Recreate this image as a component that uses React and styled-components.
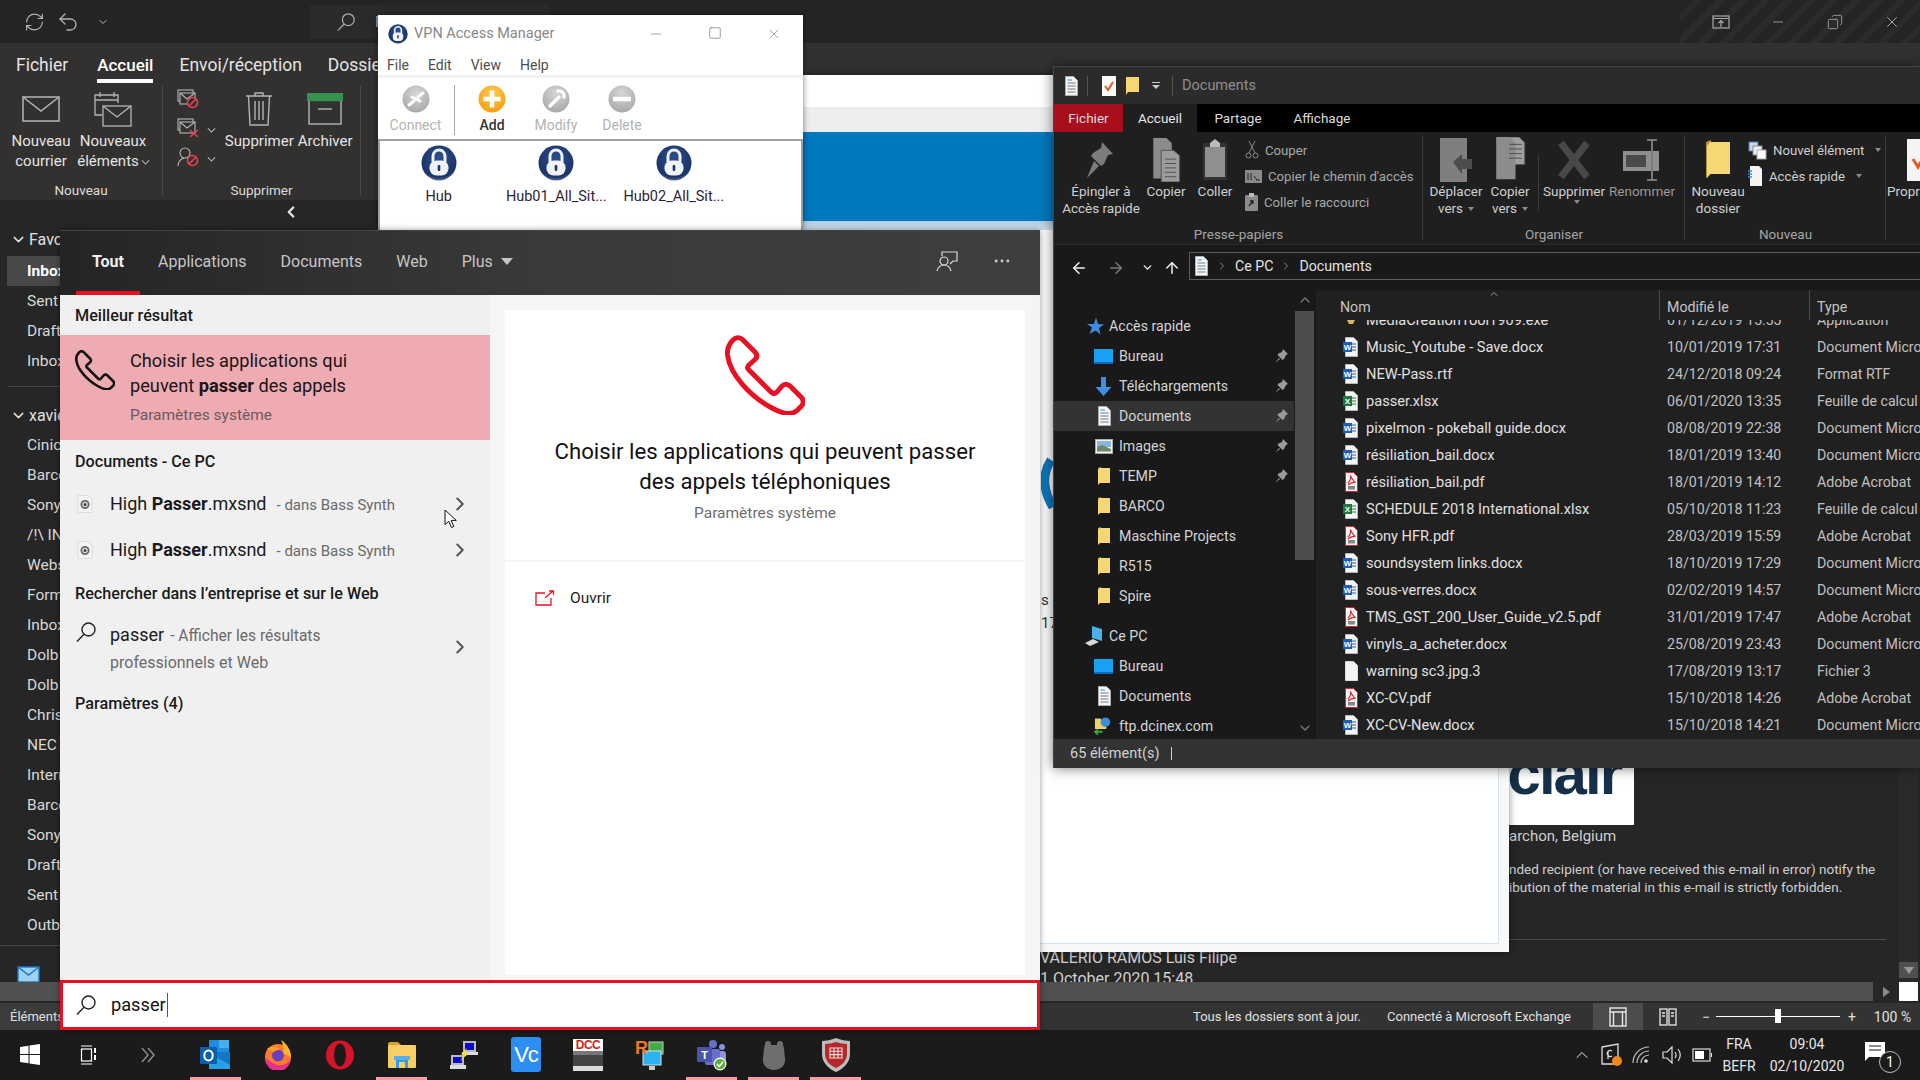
import React from 'react';
import styled, { createGlobalStyle } from 'styled-components';
import { RefreshCw, Undo2, ArrowLeft, ArrowRight, ArrowUp, ChevronDown, ChevronRight, ChevronLeft, ChevronUp, Minus, Square, X, Copy, MoreHorizontal } from 'lucide-react';

const GlobalStyle = createGlobalStyle`
  html, body { margin: 0; padding: 0; background: #262626; }
  body { font-family: Roboto, "Open Sans", sans-serif; overflow: hidden; }
  * { box-sizing: border-box; }
`;

/* ---------- page + outlook behind everything ---------- */

const Desktop = styled.div`
  position: relative;
  width: 1920px;
  height: 1080px;
  overflow: hidden;
  display: flex;
  flex-direction: column;
  background: #262626;
`;

const OlTitle = styled.div`
  height: 43px;
  flex: none;
  display: flex;
  align-items: center;
  padding-left: 24px;
  color: #b4b4b4;
  background:
    repeating-linear-gradient(135deg, transparent 0 10px, #2b2b2b 10px 16px) 1680px 0 / 240px 100% no-repeat,
    #242424;
`;

const QuickIcon = styled.div`
  width: ${p => p.$w}px;
  display: flex;
  justify-content: center;
`;

const OlSearch = styled.div`
  margin-left: 195px;
  width: 240px;
  height: 34px;
  display: flex;
  align-items: center;
  gap: 19px;
  padding-left: 26px;
  background: #2a2a2a;
  font-size: 15px;
`;

const WinControls = styled.div`
  margin-left: auto;
  display: flex;
  align-items: center;
`;

const WinControl = styled.div`
  width: 57px;
  display: flex;
  justify-content: center;
  color: #b0b0b0;
`;

const OlRibbon = styled.div`
  height: 157px;
  flex: none;
  background: #323130;
  color: #e4e4e4;
`;

const OlTabs = styled.div`
  height: 43px;
  display: flex;
  align-items: center;
  gap: 26px;
  padding-left: 16px;
`;

const OlTab = styled.div`
  position: relative;
  font-size: ${p => (p.$active ? 17 : 17.5)}px;
  font-weight: ${p => (p.$active ? 500 : 400)};
  color: ${p => (p.$active ? '#fff' : '#e4e4e4')};
  white-space: nowrap;
  margin-left: ${p => (p.$active ? 3 : 0)}px;
  ${p => p.$active && `
    &::after {
      content: '';
      position: absolute;
      left: 0;
      right: 0;
      bottom: -8px;
      height: 4px;
      background: #fff;
    }
  `}
`;

const OlGroups = styled.div`
  height: 114px;
  display: flex;
`;

const OlGroup = styled.div`
  width: ${p => p.$w}px;
  display: flex;
  flex-direction: column;
  border-right: 1px solid #4a4a4a;
  margin-bottom: 5px;
`;

const OlGroupBody = styled.div`
  flex: 1;
  display: flex;
  padding-left: ${p => p.$pad || 0}px;
`;

const OlGroupLabel = styled.div`
  height: 10px;
  text-align: center;
  font-size: 13.5px;
  color: #dcdcdc;
  line-height: 10px;
`;

const OlLarge = styled.div`
  width: ${p => p.$w}px;
  display: flex;
  flex-direction: column;
  align-items: center;
  font-size: 15px;
  line-height: 20px;
  text-align: center;
  white-space: nowrap;
`;

const OlLargeIcon = styled.div`
  height: 45px;
  flex: none;
  display: flex;
  align-items: center;
  justify-content: center;
`;

const OlSmallCol = styled.div`
  width: 53px;
  display: flex;
  flex-direction: column;
  gap: 5px;
  padding-top: 1px;
  & > div { display: flex; align-items: center; gap: 6px; height: 24px; }
`;

const OlBody = styled.div`
  height: 782px;
  flex: none;
  display: flex;
`;

const NavPane = styled.div`
  width: 310px;
  flex: none;
  display: flex;
  flex-direction: column;
  padding-top: 22px;
  position: relative;
  color: #d8d8d8;
  font-size: 15.5px;
  overflow: hidden;
`;

const CollapseBtn = styled.div`
  position: absolute;
  left: 282px;
  top: 3px;
  color: #e8e8e8;
`;

const NavHeader = styled.div`
  height: ${p => p.$h}px;
  flex: none;
  display: flex;
  align-items: center;
  gap: 2px;
  padding-left: 10px;
  font-size: 16px;
  color: #e0e0e0;
  white-space: nowrap;
`;

const NavItem = styled.div`
  height: 30px;
  flex: none;
  margin-left: 7px;
  padding-left: 20px;
  display: flex;
  align-items: center;
  white-space: nowrap;
  background: ${p => (p.$active ? '#484848' : 'transparent')};
  font-weight: ${p => (p.$active ? 700 : 400)};
  color: ${p => (p.$active ? '#fff' : '#d8d8d8')};
`;

const NavRule = styled.div`
  height: 1px;
  flex: none;
  margin: ${p => p.$m};
  background: #444;
`;

const NavMail = styled.div`
  flex: none;
  padding: 20px 0 0 17px;
`;

const Reading = styled.div`
  flex: 1;
  display: flex;
  flex-direction: column;
  justify-content: flex-end;
  align-items: flex-start;
  color: #d0d0d0;
  overflow: hidden;
`;

const LogoBox = styled.div`
  margin: 0 0 0 1160px;
  width: 164px;
  height: 130px;
  background: #fff;
  display: flex;
  justify-content: flex-end;
  align-items: flex-end;
  padding: 0 13px 28px 0;
  color: #17304a;
  font-family: "Liberation Sans", sans-serif;
  font-weight: 700;
  font-size: 60px;
  line-height: 46px;
  letter-spacing: -2px;
  overflow: hidden;
`;

const MailLine = styled.div`
  margin-left: ${p => p.$left || 1199}px;
  margin-top: ${p => p.$top || 0}px;
  font-size: ${p => p.$size || 13.5}px;
  line-height: ${p => p.$lh || 18}px;
  height: ${p => p.$h || p.$lh || 18}px;
  white-space: nowrap;
  overflow: ${p => (p.$h ? 'hidden' : 'visible')};
`;

const MailRule = styled.div`
  margin: 43px 0 8px 1199px;
  width: 377px;
  height: 1px;
  background: #4a4a4a;
`;

const VStrip = styled.div`
  width: 19px;
  margin-right: 2px;
  flex: none;
  display: flex;
  flex-direction: column;
  justify-content: flex-end;
  background: #2a2a2a;
  padding-bottom: 4px;
`;

const VArrow = styled.div`
  height: 16px;
  background: #505050;
  display: flex;
  align-items: center;
  justify-content: center;
  &::after {
    content: '';
    border: 5px solid transparent;
    border-top: 7px solid #999;
    border-bottom: 0;
  }
`;

const HScroll = styled.div`
  height: 21px;
  flex: none;
  display: flex;
  align-items: stretch;
  padding-bottom: 2px;
`;

const HThumb = styled.div`
  width: 1873px;
  background: #505050;
`;

const HArrow = styled.div`
  width: 26px;
  display: flex;
  align-items: center;
  justify-content: center;
  &::after {
    content: '';
    border: 5px solid transparent;
    border-left: 7px solid #8a8a8a;
    border-right: 0;
  }
`;

const HCorner = styled.div`
  width: 19px;
  background: #fff;
`;

const OlStatus = styled.div`
  height: 27px;
  flex: none;
  display: flex;
  align-items: center;
  background: #333;
  color: #e0e0e0;
  font-size: 13px;
`;

const StatusLeft = styled.div`
  width: 60px;
  padding-left: 10px;
  height: 100%;
  display: flex;
  align-items: center;
  background: #3c3c3c;
  overflow: hidden;
`;

const StatusText = styled.div`
  margin-left: ${p => p.$left}px;
  white-space: nowrap;
`;

const ViewBtn = styled.div`
  width: ${p => p.$w}px;
  height: 100%;
  margin-left: ${p => p.$left || 0}px;
  display: flex;
  align-items: center;
  justify-content: center;
  background: ${p => (p.$active ? '#4c4c4c' : 'transparent')};
`;

const Zoom = styled.div`
  margin-left: 9px;
  display: flex;
  align-items: center;
  gap: 6px;
  font-size: 14px;
`;

const ZoomTrack = styled.div`
  position: relative;
  width: 124px;
  height: 1px;
  margin: 0 2px 0 0;
  background: #fff;
  &::after {
    content: '';
    position: absolute;
    left: 59px;
    top: -7px;
    width: 6px;
    height: 14px;
    background: #fff;
  }
`;

const ZoomValue = styled.span`
  margin-left: 12px;
`;

/* ---------- taskbar ---------- */

const Taskbar = styled.div`
  height: 50px;
  flex: none;
  display: flex;
  align-items: center;
  background: #1b1b1b;
  color: #e8e8e8;
`;

const TaskCell = styled.div`
  position: relative;
  width: ${p => p.$w}px;
  height: 100%;
  flex: none;
  display: flex;
  align-items: center;
  justify-content: center;
  margin-left: ${p => p.$left || 0}px;
  padding-bottom: 1px;
  ${p => p.$open && `
    &::after {
      content: '';
      position: absolute;
      bottom: 0;
      left: 5px;
      right: 6px;
      height: 3px;
      background: #ff9da3;
    }
  `}
`;

const Tray = styled.div`
  margin-left: auto;
  padding-right: 17px;
  display: flex;
  height: 100%;
  align-items: center;
`;

const TrayText = styled.div`
  width: ${p => p.$w}px;
  height: 100%;
  display: flex;
  flex-direction: column;
  align-items: center;
  justify-content: center;
  gap: 5px;
  font-size: 14px;
  line-height: 17px;
  color: #e6e6e6;
`;

const NotifBadge = styled.div`
  position: absolute;
  left: 26px;
  top: 21px;
  width: 22px;
  height: 22px;
  border-radius: 50%;
  border: 1px solid #bbb;
  background: #1b1b1b;
  color: #fff;
  font-size: 14px;
  line-height: 20px;
  text-align: center;
`;

/* ---------- white window behind ---------- */

const WhiteWindow = styled.div`
  position: absolute;
  left: 803px;
  top: 75px;
  width: 706px;
  height: 877px;
  background: #f8f8f8;
  display: flex;
  flex-direction: column;
  box-shadow: 0 0 8px rgba(0, 0, 0, 0.45);
`;

const Band = styled.div`
  height: ${p => p.$h}px;
  flex: none;
  background: ${p => p.$bg};
`;

const WhiteBody = styled.div`
  flex: 1;
  margin: 0 10px 8px 0;
  padding: 227px 0 0 238px;
  background: #fff;
  border-right: 1px solid #d3e3f0;
  border-bottom: 1px solid #d3e3f0;
  color: #333;
  font-size: 15px;
  line-height: 23px;
  & > svg { display: block; }
`;

const WhiteNote = styled.div`
  margin-top: ${p => p.$top || 0}px;
`;

/* ---------- vpn window ---------- */

const VpnWindow = styled.div`
  position: absolute;
  left: 378px;
  top: 15px;
  width: 425px;
  height: 215px;
  display: flex;
  flex-direction: column;
  background: #fff;
  box-shadow: 0 0 6px rgba(0, 0, 0, 0.5);
`;

const VpnTitle = styled.div`
  height: 37px;
  display: flex;
  align-items: center;
  padding-left: 10px;
  gap: 6px;
  color: #888;
  font-size: 14.5px;
`;

const VpnControls = styled.div`
  margin-left: auto;
  display: flex;
  color: #777;
`;

const VpnControl = styled.div`
  width: 59px;
  display: flex;
  justify-content: center;
`;

const VpnMenu = styled.div`
  height: 26px;
  display: flex;
  align-items: center;
  gap: 19px;
  padding: 2px 0 0 9px;
  color: #4e4e4e;
  font-size: 14px;
  border-bottom: 3px solid #f1f1f1;
`;

const VpnTools = styled.div`
  height: 61px;
  display: flex;
  padding-top: 7px;
`;

const VpnTool = styled.div`
  width: ${p => p.$w}px;
  display: flex;
  flex-direction: column;
  align-items: center;
  gap: 4px;
  font-size: 14px;
  color: ${p => (p.$on ? '#333' : '#b2b2b2')};
  font-weight: ${p => (p.$on ? 500 : 400)};
`;

const VpnSep = styled.div`
  width: 1px;
  height: 50px;
  margin: 0 0 0 1px;
  background: #a9a9a9;
`;

const VpnList = styled.div`
  flex: 1;
  display: flex;
  padding: 4px 0 0 0;
  border: 2px solid #a0a0a0;
  border-bottom: 0;
  background: #fff;
`;

const VpnHub = styled.div`
  width: 117.5px;
  display: flex;
  flex-direction: column;
  align-items: center;
  gap: 7px;
  font-size: 14.5px;
  color: #2c2338;
  white-space: nowrap;
`;

/* ---------- search panel ---------- */

const SearchPanel = styled.div`
  position: absolute;
  left: 60px;
  top: 230px;
  width: 980px;
  height: 800px;
  display: flex;
  flex-direction: column;
  background: #f5f5f5;
  box-shadow: 0 0 6px rgba(0, 0, 0, 0.4);
`;

const SearchHeader = styled.div`
  height: 65px;
  flex: none;
  display: flex;
  align-items: center;
  padding: 0 0 4px 32px;
  gap: 34px;
  color: #c4c4c4;
  background: linear-gradient(90deg, #242424 0%, #3a3a3a 50%, #3d3e3f 100%);
  border-top: 1px solid #444;
  position: relative;
`;

const SearchTab = styled.div`
  position: relative;
  font-size: 16px;
  font-weight: ${p => (p.$active ? 700 : 400)};
  color: ${p => (p.$active ? '#efefef' : '#c6c6c6')};
  display: flex;
  align-items: center;
  gap: 8px;
  ${p => p.$active && `
    &::after {
      content: '';
      position: absolute;
      left: -16px;
      right: -16px;
      bottom: -25px;
      height: 5px;
      background: #e81123;
    }
  `}
`;

const HeaderActions = styled.div`
  margin-left: auto;
  display: flex;
  align-items: center;
  gap: 34px;
  padding-right: 28px;
  color: #d0d0d0;
`;

const SearchColumns = styled.div`
  flex: 1;
  display: grid;
  grid-template-columns: 430px 1fr;
  min-height: 0;
`;

const ResultCol = styled.div`
  position: relative;
  background: #f0f0f0;
  display: flex;
  flex-direction: column;
`;

const SectionTitle = styled.div`
  height: ${p => p.$h}px;
  display: flex;
  align-items: center;
  padding: 1px 0 0 15px;
  font-size: 16.2px;
  font-weight: 500;
  color: #1a1a1a;
`;

const BestMatch = styled.div`
  height: 105px;
  background: #eeabb2;
  display: flex;
  padding: 15px 0 0 15px;
`;

const BestText = styled.div`
  margin: -2px 0 0 15px;
  color: #1b1516;
  font-size: 18.2px;
  line-height: 25px;
  b { font-weight: 700; }
`;

const BestSub = styled.div`
  margin-top: 7px;
  font-size: 15.5px;
  color: #6c5a5d;
  line-height: 20px;
`;

const ResultRow = styled.div`
  height: ${p => p.$h}px;
  display: flex;
  align-items: ${p => (p.$top ? 'flex-start' : 'center')};
  padding: ${p => (p.$top ? '8px' : '0')} 14px 0 15px;
`;

const ResultIcon = styled.div`
  width: 35px;
  flex: none;
  display: flex;
  padding-left: ${p => p.$pad || 0}px;
`;

const ResultText = styled.div`
  flex: 1;
  font-size: 18px;
  color: #1a1a1a;
  line-height: 27px;
  white-space: nowrap;
  b { font-weight: 700; }
`;

const ResultMuted = styled.span`
  font-size: ${p => p.$size || 15}px;
  color: #6a6a6a;
  margin-left: ${p => p.$gap || 10}px;
`;

const ResultMore = styled.div`
  font-size: 16px;
  color: #6a6a6a;
  line-height: 26px;
`;

const Arrow = styled.div`
  color: #555;
  width: 24px;
  margin-right: 4px;
  display: flex;
  justify-content: center;
  ${p => p.$shift && `margin-top: 15px;`}
`;

const MouseCursor = styled.div`
  position: absolute;
  left: 384px;
  top: 214px;
`;

const PreviewCol = styled.div`
  padding: 15px 15px 5px;
  display: flex;
  flex-direction: column;
`;

const PreviewCard = styled.div`
  height: 250px;
  flex: none;
  background: #fff;
  display: flex;
  flex-direction: column;
  align-items: center;
  padding-top: 25px;
`;

const PreviewTitle = styled.div`
  margin-top: 21px;
  font-size: 22.2px;
  line-height: 30px;
  color: #111;
  text-align: center;
`;

const PreviewSub = styled.div`
  margin-top: 8px;
  color: #6e6e6e;
  font-size: 15.5px;
`;

const PreviewActions = styled.div`
  flex: 1;
  margin-top: 2px;
  background: #fff;
  padding: 27px 0 0 30px;
`;

const OpenAction = styled.div`
  display: flex;
  align-items: center;
  gap: 15px;
  font-size: 15.5px;
  color: #222;
`;

const SearchInput = styled.div`
  height: 50px;
  flex: none;
  display: flex;
  align-items: center;
  gap: 14px;
  padding-left: 12px;
  border: 3px solid #e81123;
  background: #fff;
  font-size: 18.2px;
  color: #111;
`;

const Caret = styled.span`
  display: inline-block;
  width: 1.5px;
  height: 24px;
  margin-left: 1px;
  background: #555;
  vertical-align: -6px;
`;

/* ---------- explorer ---------- */

const Explorer = styled.div`
  position: absolute;
  left: 1053px;
  top: 66px;
  width: 867px;
  height: 702px;
  display: flex;
  flex-direction: column;
  background: #191919;
  border-top: 1px solid #444;
  border-left: 1px solid #444;
  box-shadow: 0 0 12px rgba(0, 0, 0, 0.55);
  color: #d9d9d9;
  font-size: 14.2px;
  overflow: hidden;
`;

const ExTitle = styled.div`
  height: 37px;
  flex: none;
  display: flex;
  align-items: center;
  padding-left: 9px;
  background: #2b2b2b;
  color: #8f8f8f;
  font-size: 14.5px;
`;

const ExTitleSep = styled.div`
  width: 1px;
  height: 20px;
  margin: 0 ${p => p.$r}px 0 ${p => p.$l}px;
  background: #555;
`;

const TitleGap = styled.span`
  width: ${p => p.$w}px;
`;

const ExTabs = styled.div`
  height: 28px;
  flex: none;
  display: flex;
  background: #000;
  font-size: 13.5px;
`;

const ExTab = styled.div`
  width: ${p => p.$w}px;
  display: flex;
  align-items: center;
  justify-content: center;
  color: ${p => (p.$active ? '#e8e8e8' : '#dcdcdc')};
  background: ${p => p.$bg || 'transparent'};
`;

const ExRibbon = styled.div`
  height: 113px;
  flex: none;
  display: flex;
  background: #1f1f1f;
  border-bottom: 1px solid #2b2b2b;
  font-size: 13.5px;
  color: #bdbdbd;
`;

const ExGroup = styled.div`
  width: ${p => p.$w}px;
  flex: none;
  display: flex;
  flex-direction: column;
  padding: 5px 0 0 ${p => p.$pad || 0}px;
  position: relative;
  &::after {
    content: '';
    position: absolute;
    right: 0;
    top: 3px;
    bottom: 4px;
    width: 1px;
    background: #3b3b3b;
  }
`;

const ExGroupBody = styled.div`
  flex: 1;
  display: flex;
  min-height: 0;
`;

const ExGroupLabel = styled.div`
  height: 18px;
  margin-left: ${p => (p.$pad ? -p.$pad : 0)}px;
  text-align: center;
  font-size: 13.5px;
  line-height: 16px;
  color: #a5a5a5;
`;

const ExLarge = styled.div`
  width: ${p => p.$w}px;
  flex: none;
  display: flex;
  flex-direction: column;
  align-items: center;
  text-align: center;
  line-height: 17px;
  color: ${p => (p.$dim ? '#9a9a9a' : '#cfcfcf')};
  white-space: nowrap;
`;

const ExLargeIcon = styled.div`
  height: 46px;
  flex: none;
  display: flex;
  align-items: center;
  justify-content: center;
`;

const DropMark = styled.span`
  display: inline-block;
  margin-left: 5px;
  vertical-align: 2px;
  border: 3px solid transparent;
  border-top: 4px solid #8a8a8a;
  border-bottom: 0;
`;

const ExDivider = styled.div`
  width: 1px;
  height: 55px;
  margin: 18px 3px 0 3px;
  background: #3b3b3b;
`;

const ExSmallCol = styled.div`
  margin-left: ${p => p.$left}px;
  display: flex;
  flex-direction: column;
  font-size: 13.2px;
`;

const ExSmall = styled.div`
  height: 26px;
  display: flex;
  align-items: center;
  gap: 6px;
  white-space: nowrap;
  color: ${p => (p.$on ? '#cfcfcf' : '#a8a8a8')};
`;

const AddressRow = styled.div`
  height: 45px;
  flex: none;
  display: flex;
  align-items: center;
  padding-left: 12px;
  color: #e8e8e8;
`;

const AddrBtn = styled.div`
  width: ${p => p.$w}px;
  flex: none;
  display: flex;
  justify-content: center;
  color: ${p => (p.$dim ? '#7a7a7a' : '#f0f0f0')};
`;

const AddressBox = styled.div`
  flex: 1;
  height: 28px;
  margin-top: -4px;
  display: flex;
  align-items: center;
  gap: 7px;
  padding-left: 3px;
  border: 1px solid #5c5c5c;
  border-right: 0;
  color: #e2e2e2;
  & > svg { flex: none; }
`;

const ExMain = styled.div`
  flex: 1;
  min-height: 0;
  display: flex;
`;

const TreePane = styled.div`
  width: 262px;
  flex: none;
  display: flex;
  background: #191919;
`;

const Tree = styled.div`
  width: 240px;
  flex: none;
  padding-top: 21px;
  overflow: hidden;
`;

const TreeRow = styled.div`
  height: 30px;
  flex: none;
  display: flex;
  align-items: center;
  gap: ${p => (p.$level ? 6 : 5)}px;
  padding: 0 6px 0 ${p => (p.$level ? 40 : 31)}px;
  margin-top: ${p => p.$gap || 0}px;
  background: ${p => (p.$active ? '#333' : 'transparent')};
  color: #d4d4d4;
  white-space: nowrap;
`;

const TreeIcon = styled.div`
  width: 19px;
  display: flex;
  justify-content: center;
  flex: none;
`;

const PinSlot = styled.div`
  margin-left: auto;
  color: #9a9a9a;
  display: flex;
`;

const TreeScroll = styled.div`
  width: 21px;
  flex: none;
  display: flex;
  flex-direction: column;
  align-items: center;
  color: #777;
`;

const TreeThumb = styled.div`
  width: 19px;
  height: 249px;
  background: #4d4d4d;
  margin: 3px 0 auto;
`;

const FileList = styled.div`
  flex: 1;
  min-width: 0;
  background: #202020;
  display: flex;
  flex-direction: column;
  position: relative;
`;

const FileHeader = styled.div`
  height: 30px;
  flex: none;
  display: grid;
  grid-template-columns: 343px 150px 1fr;
  align-items: stretch;
  color: #c4c4c4;
  position: relative;
  z-index: 1;
  background: #202020;
`;

const HeadCell = styled.div`
  display: flex;
  align-items: center;
  padding-top: 4px;
  padding-left: ${p => p.$pad || 7}px;
  border-left: ${p => (p.$first ? '0' : '1px solid #4a4a4a')};
`;

const SortCaret = styled.div`
  position: absolute;
  left: 172px;
  top: -3px;
  color: #999;
`;

const FileRows = styled.div`
  flex: 1;
  min-height: 0;
  margin-top: -14px;
  overflow: hidden;
`;

const FileRow = styled.div`
  height: 27px;
  display: grid;
  grid-template-columns: 343px 150px 1fr;
  align-items: center;
  white-space: nowrap;
`;

const FileName = styled.div`
  display: flex;
  align-items: center;
  gap: 7px;
  padding-left: 27px;
  font-size: 14.6px;
  color: #e0e0e0;
`;

const FileCell = styled.div`
  padding-left: 8px;
  color: #c0c0c0;
  overflow: hidden;
`;

const ExStatus = styled.div`
  height: 29px;
  flex: none;
  display: flex;
  align-items: center;
  gap: 12px;
  padding-left: 16px;
  background: #333;
  color: #d0d0d0;
  font-size: 14.5px;
`;

const StatusBar = styled.div`
  width: 1px;
  height: 13px;
  background: #ccc;
`;

/* ---------- drawings ---------- */

const PHONE = 'M8 5 C11 2 15 2 17.5 4.5 L30 17 C32.5 19.5 32.5 22 30 24.5 L24 30 C22 32 22 33 23.5 34.5 L46 57 C48 59 50 59 52 57 L57 51 C59.5 48.5 62.5 48.5 65 51 L76 62 C79 65 79 68.5 76 71.5 L72 75.5 C66 81 56 78 47 73 C26 62 5 40 2.5 20 C2 14 4 9 8 5 Z';

const Phone = ({ size, color, sw }) => (
  <svg width={size} height={size} viewBox="0 0 80 80" fill="none" stroke={color} strokeWidth={sw} strokeLinejoin="round">
    <path d={PHONE} />
  </svg>
);

const Lens = ({ size = 22, color = '#222', sw = 1.4 }) => (
  <svg width={size} height={size} viewBox="0 0 22 22" fill="none" stroke={color} strokeWidth={sw}>
    <circle cx="13.5" cy="8.5" r="6.5" />
    <path d="M9 13.2 L2 20.5" />
  </svg>
);

const MailGlyph = () => (
  <svg width="38" height="26" viewBox="0 0 38 26" fill="none" stroke="#b5b5b5" strokeWidth="1.5">
    <rect x="1" y="1" width="36" height="24" />
    <path d="M1 1 L19 15 L37 1" />
  </svg>
);

const NewItemsGlyph = () => (
  <svg width="38" height="36" viewBox="0 0 38 36" fill="none" stroke="#b5b5b5" strokeWidth="1.3">
    <path d="M8 24 H1 V4 H24 V12" />
    <path d="M1 9 H24 M6 1 V6 M20 1 V6" />
    <rect x="9" y="15" width="28" height="20" />
    <path d="M9 15 L23 26 L37 15" />
  </svg>
);

const Ignore = ({ kind }) => (
  <svg width="22" height="20" viewBox="0 0 22 20" fill="none" stroke="#b5b5b5" strokeWidth="1.1">
    {kind === 'person' ? (
      <>
        <circle cx="8" cy="6" r="5" />
        <path d="M1 19 C1 14 4 12 7 11" />
      </>
    ) : (
      <>
        <rect x="1" y="1" width="15" height="11" />
        <rect x="3" y="4" width="15" height="11" fill="#323130" />
        <path d="M3 4 L10 10 L18 4" />
      </>
    )}
    {kind === 'delete' ? (
      <path d="M13 12 L21 19 M21 12 L13 19" stroke="#e8434f" strokeWidth="1.3" />
    ) : (
      <>
        <circle cx="15.5" cy="13.5" r="5" stroke="#e8434f" strokeWidth="1.6" fill="#323130" />
        <path d="M12 17 L19 10" stroke="#e8434f" strokeWidth="1.6" />
      </>
    )}
  </svg>
);

const TrashGlyph = () => (
  <svg width="28" height="36" viewBox="0 0 28 36" fill="none" stroke="#b5b5b5" strokeWidth="1.4">
    <path d="M1 5 H27 M10 5 V2 H18 V5" />
    <path d="M3.5 5 L5 34 H23 L24.5 5" />
    <path d="M10 10 V29 M14 10 V29 M18 10 V29" />
  </svg>
);

const ArchiveGlyph = () => (
  <svg width="36" height="32" viewBox="0 0 36 32" fill="none" stroke="#b5b5b5" strokeWidth="1.4">
    <rect x="2" y="6" width="32" height="25" />
    <rect x="0.5" y="0.5" width="35" height="7" fill="#36924f" stroke="#36924f" />
    <path d="M11 16 H25" />
  </svg>
);

const ShowRibbon = () => (
  <svg width="18" height="14" viewBox="0 0 18 14" fill="none" stroke="#a8a8a8" strokeWidth="1.2">
    <rect x="1" y="1" width="16" height="12" />
    <path d="M1 3.5 H17 M9 12 V6 M6.5 8 L9 5.5 L11.5 8" />
  </svg>
);

const LockBadge = ({ size = 36 }) => (
  <svg width={size} height={size} viewBox="0 0 36 36">
    <defs>
      <radialGradient id="lockBg" cx="50%" cy="35%" r="70%">
        <stop offset="0%" stopColor="#2d4d8c" />
        <stop offset="80%" stopColor="#1b3468" />
        <stop offset="100%" stopColor="#7f90b4" />
      </radialGradient>
    </defs>
    <circle cx="18" cy="18" r="17.5" fill="url(#lockBg)" />
    <path d="M12 17 V11 a6 6 0 0 1 12 0 V17" fill="none" stroke="#eef1f6" strokeWidth="3" />
    <rect x="8.5" y="15.5" width="19" height="15" rx="7" fill="#f1f3f7" />
    <rect x="16.7" y="20" width="2.6" height="6" rx="1.2" fill="#1b3468" />
  </svg>
);

const ToolBadge = ({ kind }) => {
  const on = kind === 'add';
  return (
    <svg width="28" height="28" viewBox="0 0 28 28">
      <defs>
        <radialGradient id="grayB" cx="50%" cy="30%" r="75%">
          <stop offset="0%" stopColor="#d6d6d6" />
          <stop offset="100%" stopColor="#a6a6a6" />
        </radialGradient>
        <radialGradient id="orB" cx="50%" cy="30%" r="75%">
          <stop offset="0%" stopColor="#ffcb52" />
          <stop offset="100%" stopColor="#f79a0e" />
        </radialGradient>
      </defs>
      <circle cx="14" cy="14" r="13.5" fill={on ? 'url(#orB)' : 'url(#grayB)'} />
      {kind === 'add' && <path d="M14 5.5 V22.5 M5.5 14 H22.5" stroke="#fff" strokeWidth="4.5" />}
      {kind === 'delete' && <path d="M5 14 H23" stroke="#fff" strokeWidth="4.5" />}
      {kind === 'connect' && <path d="M7 20 L12 16 M16 12 L21 8 M10 12 L18 16" stroke="#fff" strokeWidth="3" strokeLinecap="round" />}
      {kind === 'modify' && <path d="M8 21 L17 12 M16 6 a5 5 0 0 1 6 6" stroke="#fff" strokeWidth="3.4" strokeLinecap="round" fill="none" />}
    </svg>
  );
};

const Page = ({ stroke = '#9a9a9a', fill = '#f4f4f4', children, w = 16, h = 20 }) => (
  <svg width={w} height={h} viewBox="0 0 16 20">
    <path d="M2.5 0.5 H10.5 L14.5 4.5 V19.5 H2.5 Z" fill={fill} stroke={stroke} />
    {children}
  </svg>
);

const FileIcon = ({ kind }) => {
  if (kind === 'word' || kind === 'excel') {
    const c = kind === 'word' ? '#1d5fb8' : '#1c7a41';
    return (
      <Page stroke="#b9b9b9">
        <path d="M9 7 H13 M9 10 H13 M9 13 H13" stroke={c} strokeWidth="1.2" />
        <rect x="0" y="5" width="9" height="10" fill={c} />
        <text x="4.5" y="13" fontSize="8" fontFamily="Liberation Sans, sans-serif" fontWeight="700" fill="#fff" textAnchor="middle">{kind === 'word' ? 'W' : 'X'}</text>
      </Page>
    );
  }
  if (kind === 'pdf') {
    return (
      <Page stroke="#d8262c">
        <path d="M5 11 C7 9 8 6 7.5 3.5 C9 7 10 9 12.5 10.5 C10 10 7 11 5 13" fill="none" stroke="#d8262c" strokeWidth="1.1" />
        <rect x="5" y="14" width="7" height="3.5" fill="#888" />
      </Page>
    );
  }
  if (kind === 'exe') {
    return <svg width="16" height="20" viewBox="0 0 16 20"><path d="M2 6 L14 6 L10 14 L6 14 Z" fill="#d8b45a" /></svg>;
  }
  return <Page stroke="#dcdcdc" />;
};

const TreeGlyph = ({ kind }) => {
  switch (kind) {
    case 'star':
      return <svg width="18" height="18" viewBox="0 0 18 18"><path d="M10 0.5 L12 7 L18 7.5 L13 11 L14.5 17.5 L9.5 13.5 L3.5 17 L6 10.5 L1 7 L8 7 Z" fill="#3a8fe0" /></svg>;
    case 'desk':
      return <svg width="19" height="15" viewBox="0 0 19 15"><rect width="19" height="15" fill="#19a0f0" /><rect y="13" width="19" height="2" fill="#0a6bb8" /></svg>;
    case 'down':
      return <svg width="17" height="19" viewBox="0 0 17 19"><path d="M6 0 H11 V10 H16.5 L8.5 19 L0.5 10 H6 Z" fill="#3f8fe0" /></svg>;
    case 'doc':
      return (
        <Page stroke="#b0b0b0">
          <path d="M4.5 7 H12.5 M4.5 10 H12.5 M4.5 13 H12.5 M4.5 16 H12.5" stroke="#6e7f90" />
          <path d="M4.5 4 H9" stroke="#2d8fe0" />
        </Page>
      );
    case 'img':
      return <svg width="18" height="15" viewBox="0 0 18 15"><rect x="0.5" y="0.5" width="17" height="14" fill="#f0f0f0" stroke="#aaa" /><rect x="2" y="2" width="14" height="6" fill="#8ab6dc" /><path d="M2 12.5 V8 L7 6 L16 10 V12.5 Z" fill="#6c8a6a" /></svg>;
    case 'pc':
      return <svg width="19" height="20" viewBox="0 0 19 20"><path d="M7 0 L17 3 V15 L7 12 Z" fill="#4ab0e8" /><path d="M0 17 L8 13 L14 16 L5 20 Z" fill="#d8d8d8" /></svg>;
    case 'ftp':
      return <svg width="20" height="21" viewBox="0 0 20 21"><path d="M1 2 H7 L8 4 H13 V13 H1 Z" fill="#f0d070" /><circle cx="12" cy="6" r="5" fill="#3a90d8" /><path d="M2 16 H9 M4 19 L1 16 L4 14" stroke="#38a838" strokeWidth="2" fill="none" /></svg>;
    default:
      return <svg width="14" height="19" viewBox="0 0 14 19"><path d="M1 1 L4 0 V15 L1 17 Z" fill="#c9a24a" /><path d="M3 1 H13 V16 H3 L1 18 V3 Z" fill="#f7d774" /></svg>;
  }
};

const Pin = () => (
  <svg width="13" height="14" viewBox="0 0 13 14" fill="currentColor">
    <path d="M8 0 L13 5 L11 6 L9 10 L7.5 11 L2.5 6 L3.5 4.5 L7 3 Z M4 9 L0.5 13.5 L5 10 Z" />
  </svg>
);

const Sheet = ({ w, h, shift }) => (
  <svg width={w} height={h} viewBox="0 0 32 50">
    {shift && <path d="M12 0 H26 L32 6 V30 H12 Z" fill="#a0a0a0" stroke="#555" />}
    <path d="M1 0 H16 L22 6 V46 H1 Z" fill="#8c8c8c" />
    {!shift && <path d="M10 14 H24 L31 20 V50 H10 Z" fill="#9c9c9c" stroke="#4a4a4a" />}
    {!shift && <path d="M14 24 H27 M14 29 H27 M14 34 H27 M14 39 H27 M14 44 H27" stroke="#4a4a4a" />}
    {shift && <path d="M15 8 H29 M15 13 H29 M15 18 H29 M15 23 H29" stroke="#4a4a4a" />}
  </svg>
);

const RibbonGlyph = ({ kind }) => {
  switch (kind) {
    case 'pin':
      return <svg width="28" height="40" viewBox="0 0 28 40" fill="#7c7c7c"><path d="M15 2 L26 14 L21 15 L17 24 L14 26 L4 16 L6 13 L14 8 Z" /><path d="M7 21 L0 38 L12 26 Z" /></svg>;
    case 'clip':
      return <svg width="26" height="42" viewBox="0 0 26 42"><rect x="1" y="4" width="24" height="37" rx="2" fill="#333" /><rect x="3" y="8" width="20" height="30" fill="#8f8f8f" /><path d="M8 4 L13 0 L18 4 V8 H8 Z" fill="#bbb" /></svg>;
    case 'move':
      return <svg width="32" height="44" viewBox="0 0 32 44"><path d="M0 0 H27 V44 H0 Z" fill="#7f7f7f" /><path d="M13 24 L22 16 V21 H32 V31 H22 V36 Z" fill="#4c4c4c" /></svg>;
    case 'del':
      return <svg width="32" height="42" viewBox="0 0 32 42"><path d="M3 4 L29 38 M29 4 L3 38" stroke="#484848" strokeWidth="7" /></svg>;
    case 'rename':
      return <svg width="38" height="44" viewBox="0 0 38 44"><rect x="0" y="13" width="36" height="20" fill="#8f8f8f" /><rect x="3" y="17" width="20" height="12" fill="#4a4a4a" /><path d="M24 2 H34 M29 2 V42 M24 42 H34" stroke="#7a7a7a" strokeWidth="2" fill="none" /></svg>;
    case 'folder':
      return <svg width="26" height="40" viewBox="0 0 26 40"><path d="M1 2 L6 0 V34 L1 38 Z" fill="#b98f3a" /><path d="M5 2 H25 V34 H5 L2 38 V6 Z" fill="#f7d774" /></svg>;
    case 'props':
      return <svg width="22" height="42" viewBox="0 0 22 42"><path d="M0 0 H22 V42 H0 Z" fill="#f4f4f4" /><path d="M6 20 L11 28 L20 12" stroke="#e25a22" strokeWidth="3" fill="none" /></svg>;
    default:
      return null;
  }
};

const SmallGlyph = ({ kind }) => {
  if (kind === 'cut') return <svg width="14" height="18" viewBox="0 0 14 18" fill="none" stroke="#8a8a8a"><circle cx="3.5" cy="14.5" r="2.5" /><circle cx="10.5" cy="14.5" r="2.5" /><path d="M4 12 L10 0 M10 12 L4 0" /></svg>;
  if (kind === 'path') return <svg width="17" height="13" viewBox="0 0 17 13"><rect width="17" height="13" fill="#8a8a8a" /><path d="M3 3 V10 M6 3 V10 M9 6 L12 10 M11 10 H15" stroke="#222" /></svg>;
  if (kind === 'paste') return <svg width="13" height="18" viewBox="0 0 13 18"><rect y="2" width="13" height="16" rx="1" fill="#8c8c8c" /><rect x="4" width="5" height="4" fill="#bbb" /><path d="M4 13 L8 8 M5 8 H8 V11" stroke="#222" strokeWidth="1.3" fill="none" /></svg>;
  if (kind === 'newitem') return <svg width="19" height="19" viewBox="0 0 19 19"><rect x="1" y="1" width="9" height="9" fill="#d0d8e8" stroke="#4a78b0" /><rect x="5" y="5" width="9" height="9" fill="#eee" stroke="#888" /><rect x="9" y="9" width="9" height="9" fill="#fff" stroke="#aaa" /></svg>;
  return <svg width="15" height="20" viewBox="0 0 15 20"><path d="M2 0 H11 L14 3 V20 H2 Z" fill="#f4f4f4" /><path d="M0 5 H4 M0 8 H4 M0 11 H4" stroke="#2d8fe0" strokeWidth="1.3" /></svg>;
};

const OutlookIcon = () => (
  <svg width="32" height="30" viewBox="0 0 32 30">
    <rect x="9" y="0" width="20" height="15" fill="#1f8ce0" />
    <rect x="19" y="0" width="10" height="8" fill="#40b0f0" />
    <path d="M9 12 H30 V29 H9 Z" fill="#0f78c8" />
    <path d="M9 13 L30 25 V29 H9 Z" fill="#28a0e8" />
    <rect x="0" y="7" width="17" height="17" rx="1" fill="#0a5fb0" />
    <ellipse cx="8.5" cy="15.5" rx="4.2" ry="5" fill="none" stroke="#fff" strokeWidth="2" />
  </svg>
);

const FirefoxIcon = () => (
  <svg width="30" height="30" viewBox="0 0 30 30">
    <circle cx="15" cy="17" r="13" fill="#ff7b2a" />
    <path d="M2 18 A13 13 0 0 0 28 18 C26 24 18 27 12 24 C7 22 5 19 2 18 Z" fill="#e8318a" />
    <circle cx="15" cy="15.5" r="6" fill="#6a3fc0" />
    <path d="M18 0 C24 4 28 10 28 17 L20 13 C21 8 20 4 18 0 Z" fill="#ffb52e" />
    <path d="M4 9 C8 6 13 6 17 9 L10 12 Z" fill="#ffa022" />
  </svg>
);

const OperaIcon = () => (
  <svg width="30" height="30" viewBox="0 0 30 30">
    <ellipse cx="15" cy="15" rx="14" ry="14.5" fill="#d81528" />
    <ellipse cx="15" cy="15" rx="6" ry="11.5" fill="#1b1b1b" />
  </svg>
);

const FolderIcon = () => (
  <svg width="28" height="26" viewBox="0 0 28 26">
    <path d="M0 2 Q0 0 2 0 H10 L13 3 H0 Z" fill="#d8a030" />
    <rect x="0" y="3" width="28" height="23" rx="1" fill="#f7cf66" />
    <path d="M8 26 V17 H20 V26 H17 V20 H11 V26 Z" fill="#3a9ce0" />
    <rect x="6" y="14" width="16" height="4" fill="#54b0f0" />
  </svg>
);

const NetIcon = () => (
  <svg width="30" height="30" viewBox="0 0 30 30">
    <rect x="14" y="1" width="13" height="11" fill="#bbb" /><rect x="16" y="3" width="9" height="7" fill="#0a0ad0" />
    <rect x="13" y="12" width="16" height="3" fill="#ddd" />
    <rect x="2" y="15" width="13" height="10" fill="#bbb" /><rect x="4" y="17" width="9" height="6" fill="#0a0ad0" />
    <rect x="1" y="25" width="16" height="4" fill="#ddd" />
    <path d="M18 8 L12 14 L15 15 L11 21 L19 14 L16 13 Z" fill="#f7e020" />
  </svg>
);

const VncLogo = styled.div`
  width: 30px;
  height: 35px;
  border-radius: 3px;
  background: #2c8ef0;
  color: #fff;
  font-family: "Liberation Sans", sans-serif;
  font-size: 22px;
  line-height: 35px;
  text-align: center;
  letter-spacing: -1px;
`;

const DccLogo = styled.div`
  width: 30px;
  height: 32px;
  background: linear-gradient(#fff 0 12px, #777 12px 16px, #444 16px 27px, #ddd 27px);
  color: #d81e1e;
  font-family: "Liberation Sans", sans-serif;
  font-weight: 700;
  font-size: 12px;
  line-height: 13px;
  text-align: center;
  letter-spacing: -0.5px;
`;

const RIcon = () => (
  <svg width="30" height="32" viewBox="0 0 30 32">
    <rect x="14" y="3" width="14" height="12" fill="#3fae48" stroke="#ccc" />
    <rect x="8" y="12" width="18" height="14" fill="#2cb2f0" stroke="#ddd" />
    <rect x="14" y="27" width="6" height="4" fill="#ccc" />
    <text x="0" y="15" fontSize="18" fontFamily="Liberation Sans, sans-serif" fontWeight="700" fill="#f07a1a">R</text>
  </svg>
);

const TeamsIcon = () => (
  <svg width="30" height="32" viewBox="0 0 30 32">
    <circle cx="16" cy="5" r="4" fill="#6670c8" />
    <circle cx="25" cy="8" r="3" fill="#8a92dc" />
    <rect x="18" y="12" width="11" height="12" rx="3" fill="#8a92dc" />
    <rect x="8" y="10" width="15" height="16" rx="2" fill="#6670c8" />
    <rect x="0" y="8" width="15" height="15" rx="1" fill="#4a54a8" />
    <text x="7.5" y="20" fontSize="11" fontFamily="Liberation Sans, sans-serif" fontWeight="700" fill="#fff" textAnchor="middle">T</text>
    <circle cx="23" cy="25" r="6.5" fill="#fff" />
    <circle cx="23" cy="25" r="5.3" fill="#5fae3c" />
    <path d="M20 25 L22.3 27.5 L26 22.7" stroke="#fff" strokeWidth="1.5" fill="none" />
  </svg>
);

const HippoIcon = () => (
  <svg width="26" height="30" viewBox="0 0 26 30" fill="#6e6e6e">
    <circle cx="7" cy="4" r="3" />
    <circle cx="19" cy="4" r="3" />
    <path d="M4 5 H22 C24 10 23 13 24 18 C25 25 20 30 13 30 C6 30 1 25 2 18 C3 13 2 10 4 5 Z" />
  </svg>
);

const ShieldIcon = () => (
  <svg width="28" height="34" viewBox="0 0 28 34">
    <path d="M14 0 C19 2 24 3 28 3 V16 C28 25 21 31 14 34 C7 31 0 25 0 16 V3 C4 3 9 2 14 0 Z" fill="#bdbdbd" />
    <path d="M14 4 C18 5 22 6 25 6 V16 C25 23 19 28 14 30 C9 28 3 23 3 16 V6 C6 6 10 5 14 4 Z" fill="#b5282a" />
    <path d="M8 10 H20 V20 H8 Z M8 13.3 H20 M8 16.6 H20 M12 10 V20 M16 10 V20" stroke="#f3dede" strokeWidth="1.1" fill="none" />
  </svg>
);

const WinLogo = () => (
  <svg width="20" height="21" viewBox="0 0 20 21" fill="#fff">
    <path d="M0 3 L8.5 1.7 V10 H0 Z M9.5 1.5 L20 0 V10 H9.5 Z M0 11 H8.5 V19.3 L0 18 Z M9.5 11 H20 V21 L9.5 19.5 Z" />
  </svg>
);

const TaskView = () => (
  <svg width="19" height="22" viewBox="0 0 19 22" fill="none" stroke="#fff" strokeWidth="1.2">
    <path d="M1 2 H12 M1 20 H12" />
    <rect x="1.5" y="5" width="10" height="12" />
    <path d="M15 4 V9 M15 11 V16" strokeWidth="2" />
  </svg>
);

const Overflow = () => (
  <svg width="16" height="16" viewBox="0 0 16 16" fill="none" stroke="#8c8c8c" strokeWidth="1.5">
    <path d="M2 1 L8 8 L2 15 M8 1 L14 8 L8 15" />
  </svg>
);

const Feedback = () => (
  <svg width="22" height="22" viewBox="0 0 22 22" fill="none" stroke="#d8d8d8" strokeWidth="1.2">
    <path d="M6 6 V2 H21 V11 H17 L14 14" />
    <circle cx="8" cy="11" r="4" />
    <path d="M1 21 C2 17 5 15 8 15 C11 15 14 17 15 21" />
  </svg>
);

const OpenIcon = () => (
  <svg width="20" height="16" viewBox="0 0 20 16" fill="none" stroke="#e81123" strokeWidth="1.3">
    <path d="M10 3 H1 V15 H16 V8" />
    <path d="M10 8 L18 1 M14 1 H18.5 V5" />
  </svg>
);

const SoundFile = () => (
  <svg width="16" height="18" viewBox="0 0 16 18">
    <path d="M1 0.5 H11 L15 4 V17.5 H1 Z" fill="#f4f4f4" stroke="#dcdcdc" />
    <circle cx="8" cy="9.5" r="4.5" fill="#666" />
    <circle cx="8" cy="9.5" r="2.8" fill="#ddd" />
    <circle cx="8" cy="9.5" r="1.5" fill="#444" />
  </svg>
);

const Pointer = () => (
  <svg width="14" height="20" viewBox="0 0 14 20" fill="#fff" stroke="#111" strokeWidth="1">
    <path d="M1 1 V15.5 L4.8 12.3 L7.4 18.5 L9.8 17.5 L7.2 11.4 L12.3 11.4 Z" />
  </svg>
);

const SmallCaret = styled.span`
  display: inline-block;
  margin-left: ${p => p.$left || 3}px;
  width: 7px;
  height: 7px;
  vertical-align: 2px;
  border-right: 1px solid #ddd;
  border-bottom: 1px solid #ddd;
  transform: rotate(45deg) scale(0.8);
`;

const HeadTriangle = styled.span`
  border: 6px solid transparent;
  border-top: 7px solid #c6c6c6;
  border-bottom: 0;
`;

const DocGlyph = () => <TreeGlyph kind="doc" />;

/* ---------- data ---------- */

const favs = ['Inbox', 'Sent Items', 'Drafts', 'Inbox'];
const folders = ['Cinic', 'Barco', 'Sony', '/!\\ IN', 'Webs', 'Form', 'Inbox', 'Dolb', 'Dolb', 'Chris', 'NEC', 'Intern', 'Barco', 'Sony', 'Draft', 'Sent', 'Outb'];

const tree = [
  { name: 'Accès rapide', icon: 'star', level: 0 },
  { name: 'Bureau', icon: 'desk', level: 1, pin: true },
  { name: 'Téléchargements', icon: 'down', level: 1, pin: true },
  { name: 'Documents', icon: 'doc', level: 1, pin: true, active: true },
  { name: 'Images', icon: 'img', level: 1, pin: true },
  { name: 'TEMP', icon: 'folder', level: 1, pin: true },
  { name: 'BARCO', icon: 'folder', level: 1 },
  { name: 'Maschine Projects', icon: 'folder', level: 1 },
  { name: 'R515', icon: 'folder', level: 1 },
  { name: 'Spire', icon: 'folder', level: 1 },
  { name: 'Ce PC', icon: 'pc', level: 0, gap: 10 },
  { name: 'Bureau', icon: 'desk', level: 1 },
  { name: 'Documents', icon: 'doc', level: 1 },
  { name: 'ftp.dcinex.com', icon: 'ftp', level: 1 },
];

const files = [
  ['exe', 'MediaCreationTool1909.exe', '01/12/2019 15:55', 'Application'],
  ['word', 'Music_Youtube - Save.docx', '10/01/2019 17:31', 'Document Microsoft Word'],
  ['word', 'NEW-Pass.rtf', '24/12/2018 09:24', 'Format RTF'],
  ['excel', 'passer.xlsx', '06/01/2020 13:35', 'Feuille de calcul Excel'],
  ['word', 'pixelmon - pokeball guide.docx', '08/08/2019 22:38', 'Document Microsoft Word'],
  ['word', 'résiliation_bail.docx', '18/01/2019 13:40', 'Document Microsoft Word'],
  ['pdf', 'résiliation_bail.pdf', '18/01/2019 14:12', 'Adobe Acrobat'],
  ['excel', 'SCHEDULE 2018 International.xlsx', '05/10/2018 11:23', 'Feuille de calcul Excel'],
  ['pdf', 'Sony HFR.pdf', '28/03/2019 15:59', 'Adobe Acrobat'],
  ['word', 'soundsystem links.docx', '18/10/2019 17:29', 'Document Microsoft Word'],
  ['word', 'sous-verres.docx', '02/02/2019 14:57', 'Document Microsoft Word'],
  ['pdf', 'TMS_GST_200_User_Guide_v2.5.pdf', '31/01/2019 17:47', 'Adobe Acrobat'],
  ['word', 'vinyls_a_acheter.docx', '25/08/2019 23:43', 'Document Microsoft Word'],
  ['blank', 'warning sc3.jpg.3', '17/08/2019 13:17', 'Fichier 3'],
  ['pdf', 'XC-CV.pdf', '15/10/2018 14:26', 'Adobe Acrobat'],
  ['word', 'XC-CV-New.docx', '15/10/2018 14:21', 'Document Microsoft Word'],
];

const taskIcons = [
  { el: <OutlookIcon />, open: true },
  { el: <FirefoxIcon /> },
  { el: <OperaIcon /> },
  { el: <FolderIcon />, open: true },
  { el: <NetIcon /> },
  { el: <VncLogo>Vc</VncLogo> },
  { el: <DccLogo>DCC</DccLogo> },
  { el: <RIcon /> },
  { el: <TeamsIcon />, open: true },
  { el: <HippoIcon />, open: true },
  { el: <ShieldIcon />, open: true },
];

const App = () => (
  <Desktop>
    <GlobalStyle />

    <OlTitle>
      <QuickIcon $w={21}><RefreshCw size={22} strokeWidth={1.3} /></QuickIcon>
      <QuickIcon $w={45}><Undo2 size={24} strokeWidth={1.3} /></QuickIcon>
      <QuickIcon $w={25}><ChevronDown size={12} /></QuickIcon>
      <OlSearch><Lens size={20} color="#aaa" />F</OlSearch>
      <WinControls>
        <WinControl><ShowRibbon /></WinControl>
        <WinControl><Minus size={16} strokeWidth={1.2} /></WinControl>
        <WinControl><Copy size={16} strokeWidth={1.2} style={{ transform: 'scaleX(-1)' }} /></WinControl>
        <WinControl><X size={18} strokeWidth={1.2} /></WinControl>
      </WinControls>
    </OlTitle>

    <OlRibbon>
      <OlTabs>
        <OlTab>Fichier</OlTab>
        <OlTab $active>Accueil</OlTab>
        <OlTab>Envoi/réception</OlTab>
        <OlTab>Dossier</OlTab>
      </OlTabs>
      <OlGroups>
        <OlGroup $w={163}>
          <OlGroupBody $pad={5}>
            <OlLarge $w={72}><OlLargeIcon><MailGlyph /></OlLargeIcon>Nouveau<br />courrier</OlLarge>
            <OlLarge $w={72}>
              <OlLargeIcon><NewItemsGlyph /></OlLargeIcon>
              Nouveaux<br />
              <span>éléments<SmallCaret /></span>
            </OlLarge>
          </OlGroupBody>
          <OlGroupLabel>Nouveau</OlGroupLabel>
        </OlGroup>
        <OlGroup $w={198}>
          <OlGroupBody $pad={14}>
            <OlSmallCol>
              <div><Ignore kind="ignore" /></div>
              <div><Ignore kind="delete" /><SmallCaret /></div>
              <div><Ignore kind="person" /><SmallCaret /></div>
            </OlSmallCol>
            <OlLarge $w={62}><OlLargeIcon><TrashGlyph /></OlLargeIcon>Supprimer</OlLarge>
            <OlLarge $w={72}><OlLargeIcon><ArchiveGlyph /></OlLargeIcon>Archiver</OlLarge>
          </OlGroupBody>
          <OlGroupLabel>Supprimer</OlGroupLabel>
        </OlGroup>
      </OlGroups>
    </OlRibbon>

    <OlBody>
      <NavPane>
        <CollapseBtn><ChevronLeft size={18} strokeWidth={3} /></CollapseBtn>
        <NavHeader $h={34}><ChevronDown size={17} />Favoris</NavHeader>
        {favs.map((f, i) => <NavItem key={i} $active={i === 0}>{f}</NavItem>)}
        <NavRule $m="10px 0 13px 7px" />
        <NavHeader $h={30}><ChevronDown size={17} />xavier</NavHeader>
        {folders.map((f, i) => <NavItem key={i}>{f}</NavItem>)}
        <NavRule $m="5px 0 0 0" />
        <NavMail>
          <svg width="23" height="17" viewBox="0 0 23 17" fill="#9ed0f0" stroke="#1a78c8" strokeWidth="1.4">
            <rect x="1" y="1" width="21" height="15" />
            <path d="M1 1 L11.5 9 L22 1" fill="none" />
          </svg>
        </NavMail>
      </NavPane>

      <Reading>
        <LogoBox>clair</LogoBox>
        <MailLine $top={2} $size={15}>archon, Belgium</MailLine>
        <MailLine $top={15}>nded recipient (or have received this e-mail in error) notify the</MailLine>
        <MailLine>ibution of the material in this e-mail is strictly forbidden.</MailLine>
        <MailRule />
        <MailLine $left={730} $size={16} $lh={20}>VALERIO RAMOS Luis Filipe</MailLine>
        <MailLine $left={730} $size={16} $lh={16} $h={11} $top={3}>1 October 2020 15:48</MailLine>
      </Reading>
      <VStrip><VArrow /></VStrip>
    </OlBody>

    <HScroll>
      <HThumb />
      <HArrow />
      <HCorner />
    </HScroll>

    <OlStatus>
      <StatusLeft>Éléments</StatusLeft>
      <StatusText $left={1133}>Tous les dossiers sont à jour.</StatusText>
      <StatusText $left={26}>Connecté à Microsoft Exchange</StatusText>
      <ViewBtn $w={50} $left={22} $active>
        <svg width="18" height="20" viewBox="0 0 18 20" fill="none" stroke="#e8e8e8" strokeWidth="1.4"><rect x="1" y="1" width="16" height="18" /><path d="M1 5 H17 M4.5 5 V19 M13.5 5 V19" /></svg>
      </ViewBtn>
      <ViewBtn $w={50}>
        <svg width="18" height="18" viewBox="0 0 18 18" fill="none" stroke="#e8e8e8" strokeWidth="1.3"><rect x="1" y="1" width="7" height="16" /><rect x="10" y="1" width="7" height="16" /><path d="M3 5 H6 M3 8 H6 M12 5 H15 M12 8 H15" /></svg>
      </ViewBtn>
      <Zoom>
        −<ZoomTrack />+<ZoomValue>100 %</ZoomValue>
      </Zoom>
    </OlStatus>

    <Taskbar>
      <TaskCell $w={60}><WinLogo /></TaskCell>
      <TaskCell $w={58}><TaskView /></TaskCell>
      <TaskCell $w={60}><Overflow /></TaskCell>
      {taskIcons.map((t, i) => (
        <TaskCell key={i} $w={62} $left={i === 0 ? 7 : 0} $open={t.open}>{t.el}</TaskCell>
      ))}
      <Tray>
        <TaskCell $w={30}><ChevronUp size={20} strokeWidth={1.2} /></TaskCell>
        <TaskCell $w={30}>
          <svg width="22" height="24" viewBox="0 0 22 24" fill="none" stroke="#ddd" strokeWidth="1.3"><path d="M1 4 L17 1 V21 L1 21 Z" /><path d="M11 8 A3 3 0 1 0 11 13 M7 16 V9" /><circle cx="16" cy="18" r="5" fill="#f08a1a" stroke="none" /></svg>
        </TaskCell>
        <TaskCell $w={30}>
          <svg width="20" height="18" viewBox="0 0 20 18" fill="none" stroke="#bdbdbd" strokeWidth="1.2"><path d="M1 17 A16 16 0 0 1 17 1 M5 17 A12 12 0 0 1 17 5 M9 17 A8 8 0 0 1 17 9" /><circle cx="14" cy="15" r="1.8" fill="#ddd" stroke="none" /></svg>
        </TaskCell>
        <TaskCell $w={30}>
          <svg width="22" height="20" viewBox="0 0 22 20" fill="none" stroke="#ddd" strokeWidth="1.2"><path d="M2 7 H6 L11 2 V18 L6 13 H2 Z M14 7 C15.5 9 15.5 11 14 13 M17 4 C20 8 20 12 17 16" /></svg>
        </TaskCell>
        <TaskCell $w={30}>
          <svg width="20" height="14" viewBox="0 0 20 14" fill="none" stroke="#ddd" strokeWidth="1.2"><rect x="1" y="1" width="17" height="12" /><rect x="3" y="3" width="9" height="8" fill="#fff" stroke="none" /><path d="M19.5 5 V9" /></svg>
        </TaskCell>
        <TrayText $w={44}><span>FRA</span><span>BEFR</span></TrayText>
        <TrayText $w={92}><span>09:04</span><span>02/10/2020</span></TrayText>
        <TaskCell $w={50}>
          <svg width="20" height="19" viewBox="0 0 20 19" style={{ marginLeft: -6, marginTop: -6 }}><path d="M0 0 H20 V15 H4 L0 19 Z" fill="#fff" /><path d="M4 4 H16 M4 8 H16" stroke="#1b1b1b" /></svg>
          <NotifBadge>1</NotifBadge>
        </TaskCell>
      </Tray>
    </Taskbar>

    {/* white app window */}
    <WhiteWindow>
      <Band $h={32} $bg="#fff" />
      <Band $h={25} $bg="#eee" />
      <Band $h={89} $bg="#0078be" />
      <Band $h={9} $bg="linear-gradient(#b3cde2, #d0e0ec)" />
      <WhiteBody>
        <svg width="30" height="52" viewBox="0 0 30 52" fill="none" stroke="#0f78bd" strokeWidth="9"><path d="M10 3 C0 18 3 36 12 50" /></svg>
        <WhiteNote $top={80}>s</WhiteNote>
        <WhiteNote>17</WhiteNote>
      </WhiteBody>
    </WhiteWindow>

    {/* VPN Access Manager */}
    <VpnWindow>
      <VpnTitle>
        <LockBadge size={20} />
        VPN Access Manager
        <VpnControls>
          <VpnControl><Minus size={16} strokeWidth={1} /></VpnControl>
          <VpnControl><Square size={14} strokeWidth={1.2} /></VpnControl>
          <VpnControl><X size={16} strokeWidth={1} /></VpnControl>
        </VpnControls>
      </VpnTitle>
      <VpnMenu>
        <span>File</span><span>Edit</span><span>View</span><span>Help</span>
      </VpnMenu>
      <VpnTools>
        <VpnTool $w={75}><ToolBadge kind="connect" />Connect</VpnTool>
        <VpnSep />
        <VpnTool $w={74} $on><ToolBadge kind="add" />Add</VpnTool>
        <VpnTool $w={54}><ToolBadge kind="modify" />Modify</VpnTool>
        <VpnTool $w={78}><ToolBadge kind="delete" />Delete</VpnTool>
      </VpnTools>
      <VpnList>
        <VpnHub><LockBadge />Hub</VpnHub>
        <VpnHub><LockBadge />Hub01_All_Sit...</VpnHub>
        <VpnHub><LockBadge />Hub02_All_Sit...</VpnHub>
      </VpnList>
    </VpnWindow>

    {/* Windows search */}
    <SearchPanel>
      <SearchHeader>
        <SearchTab $active>Tout</SearchTab>
        <SearchTab>Applications</SearchTab>
        <SearchTab>Documents</SearchTab>
        <SearchTab>Web</SearchTab>
        <SearchTab>Plus<HeadTriangle /></SearchTab>
        <HeaderActions>
          <Feedback />
          <MoreHorizontal size={20} strokeWidth={1.5} />
        </HeaderActions>
      </SearchHeader>
      <SearchColumns>
        <ResultCol>
          <SectionTitle $h={40}>Meilleur résultat</SectionTitle>
          <BestMatch>
            <Phone size={40} color="#111" sw={5} />
            <BestText>
              Choisir les applications qui<br />
              peuvent <b>passer</b> des appels
              <BestSub>Paramètres système</BestSub>
            </BestText>
          </BestMatch>
          <SectionTitle $h={41}>Documents - Ce PC</SectionTitle>
          <ResultRow $h={46}>
            <ResultIcon $pad={2}><SoundFile /></ResultIcon>
            <ResultText>High <b>Passer</b>.mxsnd<ResultMuted>- dans Bass Synth</ResultMuted></ResultText>
            <Arrow><ChevronRight size={22} strokeWidth={2.2} /></Arrow>
          </ResultRow>
          <ResultRow $h={46}>
            <ResultIcon $pad={2}><SoundFile /></ResultIcon>
            <ResultText>High <b>Passer</b>.mxsnd<ResultMuted>- dans Bass Synth</ResultMuted></ResultText>
            <Arrow><ChevronRight size={22} strokeWidth={2.2} /></Arrow>
          </ResultRow>
          <SectionTitle $h={40}>Rechercher dans l’entreprise et sur le Web</SectionTitle>
          <ResultRow $h={70} $top>
            <ResultIcon><Lens size={22} /></ResultIcon>
            <ResultText>
              passer<ResultMuted $size={15.6} $gap={6}>- Afficher les résultats</ResultMuted>
              <ResultMore>professionnels et Web</ResultMore>
            </ResultText>
            <Arrow $shift><ChevronRight size={22} strokeWidth={2.2} /></Arrow>
          </ResultRow>
          <SectionTitle $h={40}>Paramètres (4)</SectionTitle>
          <MouseCursor><Pointer /></MouseCursor>
        </ResultCol>
        <PreviewCol>
          <PreviewCard>
            <Phone size={80} color="#e81123" sw={5} />
            <PreviewTitle>
              Choisir les applications qui peuvent passer<br />
              des appels téléphoniques
            </PreviewTitle>
            <PreviewSub>Paramètres système</PreviewSub>
          </PreviewCard>
          <PreviewActions>
            <OpenAction><OpenIcon />Ouvrir</OpenAction>
          </PreviewActions>
        </PreviewCol>
      </SearchColumns>
      <SearchInput>
        <Lens size={22} />
        <span>passer<Caret /></span>
      </SearchInput>
    </SearchPanel>

    {/* File explorer */}
    <Explorer>
      <ExTitle>
        <DocGlyph />
        <ExTitleSep $l={8} $r={14} />
        <svg width="14" height="20" viewBox="0 0 14 20"><rect width="14" height="20" fill="#fafafa" /><path d="M3 10 L6 14 L11 6" stroke="#e25a22" strokeWidth="2" fill="none" /></svg>
        <TitleGap $w={10} />
        <svg width="13" height="19" viewBox="0 0 13 19"><path d="M0 1 H13 V16 H2 L0 19 Z" fill="#f7d774" /></svg>
        <TitleGap $w={13} />
        <svg width="8" height="8" viewBox="0 0 8 8" fill="#ccc"><path d="M0 0 H8 V1 H0 Z M0 3 H8 L4 7 Z" /></svg>
        <ExTitleSep $l={12} $r={9} />
        Documents
      </ExTitle>

      <ExTabs>
        <ExTab $w={69} $bg="#a80f1d">Fichier</ExTab>
        <ExTab $w={74} $bg="#1f1f1f" $active>Accueil</ExTab>
        <ExTab $w={82}>Partage</ExTab>
        <ExTab $w={86}>Affichage</ExTab>
      </ExTabs>

      <ExRibbon>
        <ExGroup $w={369} $pad={6}>
          <ExGroupBody>
            <ExLarge $w={82}><ExLargeIcon><RibbonGlyph kind="pin" /></ExLargeIcon>Épingler à<br />Accès rapide</ExLarge>
            <ExLarge $w={48}><ExLargeIcon><Sheet w={31} h={44} /></ExLargeIcon>Copier</ExLarge>
            <ExLarge $w={50}><ExLargeIcon><RibbonGlyph kind="clip" /></ExLargeIcon>Coller</ExLarge>
            <ExSmallCol $left={5}>
              <ExSmall><SmallGlyph kind="cut" />Couper</ExSmall>
              <ExSmall><SmallGlyph kind="path" />Copier le chemin d'accès</ExSmall>
              <ExSmall><SmallGlyph kind="paste" />Coller le raccourci</ExSmall>
            </ExSmallCol>
          </ExGroupBody>
          <ExGroupLabel $pad={6}>Presse-papiers</ExGroupLabel>
        </ExGroup>
        <ExGroup $w={262} $pad={4}>
          <ExGroupBody>
            <ExLarge $w={58}><ExLargeIcon><RibbonGlyph kind="move" /></ExLargeIcon>Déplacer<br /><span>vers<DropMark /></span></ExLarge>
            <ExLarge $w={50}><ExLargeIcon><Sheet w={32} h={46} shift /></ExLargeIcon>Copier<br /><span>vers<DropMark /></span></ExLarge>
            <ExDivider />
            <ExLarge $w={64}><ExLargeIcon><RibbonGlyph kind="del" /></ExLargeIcon>Supprimer<br /><DropMark /></ExLarge>
            <ExLarge $w={72} $dim><ExLargeIcon><RibbonGlyph kind="rename" /></ExLargeIcon>Renommer</ExLarge>
          </ExGroupBody>
          <ExGroupLabel $pad={4}>Organiser</ExGroupLabel>
        </ExGroup>
        <ExGroup $w={201} $pad={6}>
          <ExGroupBody>
            <ExLarge $w={54}><ExLargeIcon><RibbonGlyph kind="folder" /></ExLargeIcon>Nouveau<br />dossier</ExLarge>
            <ExSmallCol $left={3}>
              <ExSmall $on><SmallGlyph kind="newitem" />Nouvel élément<DropMark /></ExSmall>
              <ExSmall $on><SmallGlyph kind="quick" />Accès rapide<DropMark /></ExSmall>
            </ExSmallCol>
          </ExGroupBody>
          <ExGroupLabel $pad={6}>Nouveau</ExGroupLabel>
        </ExGroup>
        <ExGroup $w={60} $pad={2}>
          <ExGroupBody>
            <ExLarge $w={60}><ExLargeIcon><RibbonGlyph kind="props" /></ExLargeIcon>Propriétés</ExLarge>
          </ExGroupBody>
        </ExGroup>
      </ExRibbon>

      <AddressRow>
        <AddrBtn $w={26}><ArrowLeft size={18} /></AddrBtn>
        <AddrBtn $w={48} $dim><ArrowRight size={18} /></AddrBtn>
        <AddrBtn $w={14}><ChevronDown size={13} strokeWidth={2.5} /></AddrBtn>
        <AddrBtn $w={35}><ArrowUp size={18} /></AddrBtn>
        <AddressBox>
          <DocGlyph />
          <ChevronRight size={12} color="#888" />
          Ce PC
          <ChevronRight size={12} color="#888" />
          Documents
        </AddressBox>
      </AddressRow>

      <ExMain>
        <TreePane>
          <Tree>
            {tree.map((n, i) => (
              <TreeRow key={i} $level={n.level} $active={n.active} $gap={n.gap}>
                <TreeIcon><TreeGlyph kind={n.icon} /></TreeIcon>
                {n.name}
                {n.pin && <PinSlot><Pin /></PinSlot>}
              </TreeRow>
            ))}
          </Tree>
          <TreeScroll>
            <ChevronUp size={16} style={{ marginTop: 2 }} />
            <TreeThumb />
            <ChevronDown size={16} style={{ marginBottom: 3 }} />
          </TreeScroll>
        </TreePane>
        <FileList>
          <FileHeader>
            <HeadCell $first $pad={24}>Nom</HeadCell>
            <HeadCell>Modifié le</HeadCell>
            <HeadCell>Type</HeadCell>
            <SortCaret><ChevronUp size={12} /></SortCaret>
          </FileHeader>
          <FileRows>
            {files.map(f => (
              <FileRow key={f[1]}>
                <FileName><FileIcon kind={f[0]} />{f[1]}</FileName>
                <FileCell>{f[2]}</FileCell>
                <FileCell>{f[3]}</FileCell>
              </FileRow>
            ))}
          </FileRows>
        </FileList>
      </ExMain>

      <ExStatus>65 élément(s)<StatusBar /></ExStatus>
    </Explorer>
  </Desktop>
);

export default App;
